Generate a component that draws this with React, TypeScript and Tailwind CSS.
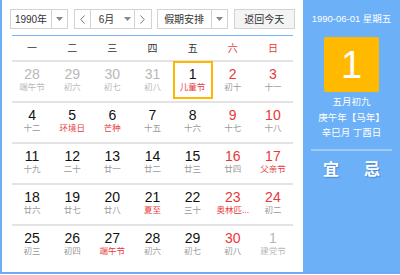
const FONT = { fontFamily: '"Liberation Sans", "Noto Sans CJK SC", sans-serif' };

type Day = { n: number; l: string; numRed?: boolean; lRed?: boolean; dim?: boolean; sel?: boolean };

const WEEKS: Day[][] = [
  [
    { n: 28, l: "端午节", dim: true },
    { n: 29, l: "初六", dim: true },
    { n: 30, l: "初七", dim: true },
    { n: 31, l: "初八", dim: true },
    { n: 1, l: "儿童节", lRed: true, sel: true },
    { n: 2, l: "初十", numRed: true },
    { n: 3, l: "十一", numRed: true },
  ],
  [
    { n: 4, l: "十二" },
    { n: 5, l: "环境日", lRed: true },
    { n: 6, l: "芒种", lRed: true },
    { n: 7, l: "十五" },
    { n: 8, l: "十六" },
    { n: 9, l: "十七", numRed: true },
    { n: 10, l: "十八", numRed: true },
  ],
  [
    { n: 11, l: "十九" },
    { n: 12, l: "二十" },
    { n: 13, l: "廿一" },
    { n: 14, l: "廿二" },
    { n: 15, l: "廿三" },
    { n: 16, l: "廿四", numRed: true },
    { n: 17, l: "父亲节", numRed: true, lRed: true },
  ],
  [
    { n: 18, l: "廿六" },
    { n: 19, l: "廿七" },
    { n: 20, l: "廿八" },
    { n: 21, l: "夏至", lRed: true },
    { n: 22, l: "三十" },
    { n: 23, l: "奥林匹...", numRed: true, lRed: true },
    { n: 24, l: "初二", numRed: true },
  ],
  [
    { n: 25, l: "初三" },
    { n: 26, l: "初四" },
    { n: 27, l: "端午节", lRed: true },
    { n: 28, l: "初六" },
    { n: 29, l: "初七" },
    { n: 30, l: "初八", numRed: true },
    { n: 1, l: "建党节", dim: true },
  ],
];

const WEEKDAYS = ["一", "二", "三", "四", "五", "六", "日"];

function Caret() {
  return (
    <svg width="7" height="4" viewBox="0 0 7 4" aria-hidden>
      <path d="M0 0h7L3.5 4z" fill="#888" />
    </svg>
  );
}

function Chevron({ dir }: { dir: "l" | "r" }) {
  return (
    <svg width="5" height="9" viewBox="0 0 5 9" aria-hidden>
      <path d={dir === "l" ? "M4.5 0.5L0.8 4.5l3.7 4" : "M0.5 0.5L4.2 4.5l-3.7 4"} fill="none" stroke="#777" strokeWidth="1" />
    </svg>
  );
}

function Select({ label, w, labelW }: { label: string; w: number; labelW: number }) {
  return (
    <div className="flex h-[20px] border border-[#d3d3d3] bg-white" style={{ width: w }}>
      <div className="flex items-center justify-center text-[10px] text-[#333]" style={{ width: labelW }}>
        {label}
      </div>
      <div className="flex flex-1 items-center justify-center border-l border-[#d3d3d3]">
        <Caret />
      </div>
    </div>
  );
}

function Cell({ d }: { d: Day }) {
  const num = d.dim ? "text-[#b8b8b8]" : d.numRed ? "text-[#e8383a]" : "text-[#111]";
  const lunar = d.dim ? "text-[#b8b8b8]" : d.lRed ? "text-[#e8383a]" : "text-[#9a9a9a]";
  return (
    <div className="flex h-[39px] justify-center">
      <div
        className={`flex h-[38px] w-[40px] flex-col items-center ${d.sel ? "-mt-[1px] border-2 border-[#ffb600] pt-[3px]" : "pt-[4px]"}`}
      >
        <span className={`text-[14px] leading-[16px] ${num}`}>{d.n}</span>
        <span className={`whitespace-nowrap text-[8.5px] leading-[11px] ${lunar}`}>{d.l}</span>
      </div>
    </div>
  );
}

export default function App() {
  return (
    <div className="flex h-[274px] w-[400px] border-b-2 border-l-2 border-[#6aaef6] bg-white" style={FONT}>
      {/* left — month grid */}
      <div className="w-[301px] px-[8px] pt-[9px]">
        <div className="flex items-center">
          <Select label="1990年" w={59} labelW={40} />
          <div className="ml-[6px] flex h-[20px] w-[78px] border border-[#d3d3d3]">
            <div className="flex w-[16px] items-center justify-center border-r border-[#d3d3d3]">
              <Chevron dir="l" />
            </div>
            <div className="flex flex-1 items-center">
              <span className="w-[30px] text-center text-[10px] text-[#333]">6月</span>
              <span className="flex flex-1 items-center justify-center">
                <Caret />
              </span>
            </div>
            <div className="flex w-[17px] items-center justify-center border-l border-[#d3d3d3]">
              <Chevron dir="r" />
            </div>
          </div>
          <div className="ml-[5px]">
            <Select label="假期安排" w={71} labelW={53} />
          </div>
          <div className="ml-[6px] flex h-[20px] w-[62px] items-center justify-center border border-[#d3d3d3] bg-[#f4f4f4] text-[10px] text-[#333]">
            返回今天
          </div>
        </div>

        <div className="mx-[2px] mt-[6px] h-[1px] bg-[#78b3f2]" />

        <div className="mx-[2px] grid h-[26px] grid-cols-7 items-center border-b-2 border-[#e3e3e3] text-[10px]">
          {WEEKDAYS.map((w, i) => (
            <span key={w} className={`text-center ${i >= 5 ? "text-[#e8383a]" : "text-[#333]"}`}>
              {w}
            </span>
          ))}
        </div>

        <div className="mx-[2px]">
          {WEEKS.map((week, r) => (
            <div
              key={r}
              className={`grid grid-cols-7 ${r < WEEKS.length - 1 ? "border-b-2 border-[#e3e3e3]" : ""}`}
            >
              {week.map((d, i) => (
                <Cell key={i} d={d} />
              ))}
            </div>
          ))}
        </div>
      </div>

      {/* right — selected day */}
      <div className="flex flex-1 flex-col items-center bg-[#6cb0f8] pt-[12px] text-white">
        <div className="whitespace-nowrap text-[9.5px] leading-[14px]">1990-06-01 星期五</div>
        <div className="mt-[11px] flex h-[55px] w-[55px] items-center justify-center rounded-[2px] bg-[#ffba00] text-[38px] leading-none">
          1
        </div>
        <div className="mt-[2px] flex flex-col items-center whitespace-nowrap text-[9.5px] leading-[15.5px]">
          <span>五月初九</span>
          <span>庚午年【马年】</span>
          <span>辛巳月 丁酉日</span>
        </div>
        <div className="mt-[8px] h-[2px] w-[81px] bg-[#9dcbf8]" />
        <div className="mt-[9px] flex w-[57px] justify-between text-[16px] font-bold leading-[20px] [text-shadow:1px_1px_1px_rgba(0,60,140,0.35)]">
          <span>宜</span>
          <span>忌</span>
        </div>
      </div>
    </div>
  );
}
